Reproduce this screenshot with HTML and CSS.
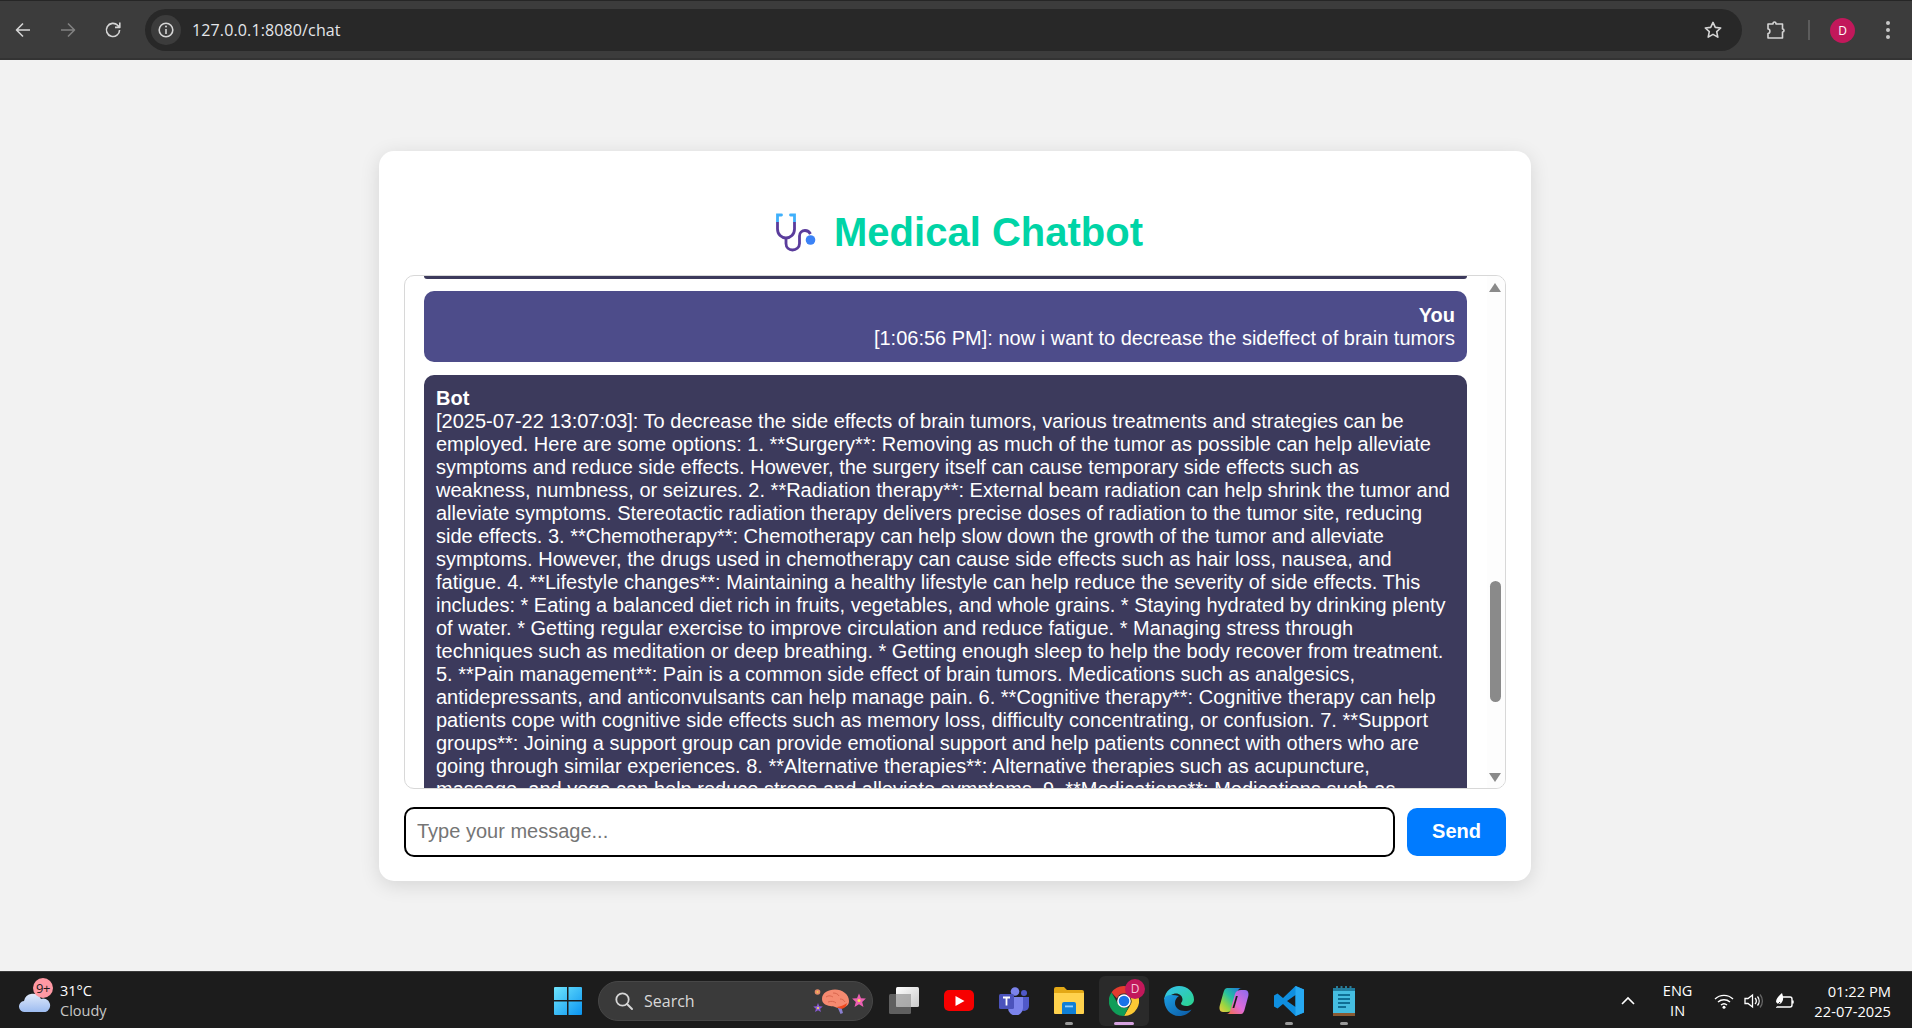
FILE: index.html
```html
<!DOCTYPE html>
<html lang="en">
<head>
<meta charset="utf-8">
<title>Medical Chatbot</title>
<link rel="stylesheet" href="styles.css">
</head>
<body>
<header class="chrome">
  <button class="nav-btn"><svg width="20" height="20" viewBox="0 0 20 20"><path d="M17 10H4M10 3.500 3.500 10l6.500 6.500" class="ico-line"/></svg></button>
  <button class="nav-btn nav-off"><svg width="20" height="20" viewBox="0 0 20 20"><path d="M3 10h13M10 3.500l6.500 6.500-6.500 6.500" class="ico-line"/></svg></button>
  <button class="nav-btn"><svg width="20" height="20" viewBox="0 0 20 20"><path d="M16.600 10a6.600 6.600 0 1 1-1.900-4.700L16.600 7M16.800 2.600V7.400H12" class="ico-line"/></svg></button>
  <div class="omnibox">
    <span class="info-chip"><svg width="18" height="18" viewBox="0 0 18 18"><circle cx="9" cy="9" r="6.800" class="ico-line"/><path d="M9 8v5" class="ico-line"/><circle cx="9" cy="5.600" r="1" class="ico-fill"/></svg></span>
    <span class="url">127.0.0.1:8080/chat</span>
    <svg class="star" width="20" height="20" viewBox="0 0 20 20"><path d="m10 2.400 2.300 5 5.400.6-4 3.700 1.100 5.400-4.800-2.700-4.800 2.700 1.100-5.400-4-3.700 5.400-.6z" class="ico-line"/></svg>
  </div>
  <svg class="puzzle" width="22" height="22" viewBox="0 0 22 22"><path d="M3 5h5c0-2.600 3-2.600 3 0h6.500v5c2 0 2 3 0 3v6H3v-4.500c2.500 0 2.500-4.500 0-4.500z" class="ico-line"/></svg>
  <span class="divider"></span>
  <span class="avatar">D</span>
  <span class="kebab"><i></i><i></i><i></i></span>
</header>

<main class="page">
  <section class="card">
    <h1 class="title">
      <svg class="steth" width="42" height="40" viewBox="0 0 42 40">
        <defs><linearGradient id="st" x1="0" y1="0" x2="0" y2="1"><stop offset=".3" stop-color="#3fb0fb"/><stop offset=".31" stop-color="#5a3c9c"/></linearGradient></defs>
        <path d="M6.500 3H2.500v14c0 5.500 4 9 8.500 9s8.500-3.500 8.500-9V3h-4" fill="none" stroke="url(#st)" stroke-width="2.800" stroke-linecap="round"/>
        <path d="M11 26v5.500c0 4 3 6.500 6.500 6.500s7-2.500 7-6.500V24c0-3.500 2.500-5.500 5.500-5.500s4.500 1.500 5.500 3.500" fill="none" stroke="#5a3c9c" stroke-width="2.800"/>
        <circle cx="35.500" cy="28" r="4.800" fill="#3b82f6"/>
      </svg>
      <span>Medical Chatbot</span>
    </h1>
    <div class="chat-box">
      <div class="messages">
        <div class="msg-stub"></div>
        <div class="msg msg-user"><strong>You</strong><br>[1:06:56 PM]: now i want to decrease the sideffect of brain tumors</div>
        <div class="msg msg-bot"><strong>Bot</strong><br>[2025-07-22 13:07:03]: To decrease the side effects of brain tumors, various treatments and strategies can be employed. Here are some options: 1. **Surgery**: Removing as much of the tumor as possible can help alleviate symptoms and reduce side effects. However, the surgery itself can cause temporary side effects such as weakness, numbness, or seizures. 2. **Radiation therapy**: External beam radiation can help shrink the tumor and alleviate symptoms. Stereotactic radiation therapy delivers precise doses of radiation to the tumor site, reducing side effects. 3. **Chemotherapy**: Chemotherapy can help slow down the growth of the tumor and alleviate symptoms. However, the drugs used in chemotherapy can cause side effects such as hair loss, nausea, and fatigue. 4. **Lifestyle changes**: Maintaining a healthy lifestyle can help reduce the severity of side effects. This includes: * Eating a balanced diet rich in fruits, vegetables, and whole grains. * Staying hydrated by drinking plenty of water. * Getting regular exercise to improve circulation and reduce fatigue. * Managing stress through techniques such as meditation or deep breathing. * Getting enough sleep to help the body recover from treatment. 5. **Pain management**: Pain is a common side effect of brain tumors. Medications such as analgesics, antidepressants, and anticonvulsants can help manage pain. 6. **Cognitive therapy**: Cognitive therapy can help patients cope with cognitive side effects such as memory loss, difficulty concentrating, or confusion. 7. **Support groups**: Joining a support group can provide emotional support and help patients connect with others who are going through similar experiences. 8. **Alternative therapies**: Alternative therapies such as acupuncture, massage, and yoga can help reduce stress and alleviate symptoms. 9. **Medications**: Medications such as</div>
      </div>
      <div class="scrollbar">
        <span class="arrow-up"></span>
        <span class="thumb"></span>
        <span class="arrow-down"></span>
      </div>
    </div>
    <form class="composer">
      <input class="composer-input" type="text" placeholder="Type your message...">
      <button class="send" type="button">Send</button>
    </form>
  </section>
</main>

<footer class="taskbar">
  <div class="tb-left">
    <div class="weather-icon">
      <svg width="32" height="22" viewBox="0 0 32 22"><defs><linearGradient id="cl" x1="0" y1="0" x2="0" y2="1"><stop offset="0" stop-color="#dfe9fb"/><stop offset="1" stop-color="#9dbcf0"/></linearGradient></defs><path d="M6 21a5.500 5.500 0 0 1-1-11 9 9 0 0 1 17-2 6.800 6.800 0 0 1 4.500 13z" fill="url(#cl)"/></svg>
      <span class="weather-badge">9+</span>
    </div>
    <div class="weather-text"><span class="w-temp">31°C</span><span class="w-desc">Cloudy</span></div>
  </div>

  <div class="tb-center">
    <div class="slot">
      <svg width="30" height="30" viewBox="0 0 30 30"><defs><linearGradient id="win" x1="0" y1="0" x2="1" y2="1"><stop offset="0" stop-color="#6fe5fd"/><stop offset="1" stop-color="#0a94f0"/></linearGradient></defs><path d="M1 2a1 1 0 0 1 1-1h12v13H1zM15.500 1H28a1 1 0 0 1 1 1v12H15.500zM1 15.500h13V29H2a1 1 0 0 1-1-1zM15.500 15.500H29V28a1 1 0 0 1-1 1H15.500z" fill="url(#win)"/></svg>
    </div>
    <div class="search">
      <svg width="20" height="20" viewBox="0 0 20 20"><circle cx="8.500" cy="8.500" r="6.200" fill="none" stroke="#d6d6d6" stroke-width="1.800"/><path d="m13 13 5 5" stroke="#d6d6d6" stroke-width="2" stroke-linecap="round"/></svg>
      <span class="search-label">Search</span>
      <svg class="brain" width="54" height="28" viewBox="0 0 54 28">
        <circle cx="5.500" cy="5" r="2.800" fill="#e58a6a"/>
        <circle cx="5.500" cy="5" r=".9" fill="#f2c84b"/>
        <polygon points="6,16 7.290,19.220 10.760,19.450 8.090,21.680 8.940,25.050 6,23.200 3.060,25.050 3.910,21.680 1.240,19.450 4.710,19.220" fill="#8a5ad6"/>
        <circle cx="6" cy="21" r="1.100" fill="#f5e050"/>
        <path d="M25 19l3.500 8 2.500-1-2-7z" fill="#8a7fd0"/>
        <path d="M10 12c0-6 6-9.500 13-9.500S37 7 37 14c0 4-3 6-6 6.500-3 .5-6 .5-8-.5-1.500-.8-3-.5-5-1-4-.7-8-2.500-8-7z" fill="#f58a70"/>
        <path d="M14 10c3-2 5-1 7 0M21 6c3 0 5 1 6 3M16 15c3-1 6-1 8 1M28 12c2 0 4 1 5 3" fill="none" stroke="#d9664e" stroke-width="1"/>
        <path d="M25 20c3-.5 7-1.500 10-4-.5 3-2 5-4 5.500-2 .5-5 0-6-1.500z" fill="#ee4a1f"/>
        <polygon points="47,6.500 49,11.200 53.900,11.600 50.200,14.900 51.500,20 47,17.300 42.500,20 43.800,14.900 40.100,11.600 45,11.200" fill="#ec5fb3"/>
        <circle cx="47" cy="13.500" r="1.500" fill="#f5e050"/>
      </svg>
    </div>
    <div class="slot">
      <svg width="30" height="30" viewBox="0 0 30 30"><defs><linearGradient id="tv" x1="0" y1="0" x2="1" y2="1"><stop offset="0" stop-color="#ffffff"/><stop offset="1" stop-color="#c9c9c9"/></linearGradient></defs><rect x="0" y="8" width="22" height="20" rx="1.500" fill="#5f5f5f"/><rect x="7" y="1" width="23" height="20" rx="1.500" fill="url(#tv)"/><path d="M7 8h15v13H7z" fill="#9a9a9a" opacity=".75"/></svg>
    </div>
    <div class="slot">
      <svg width="30" height="22" viewBox="0 0 30 22"><rect width="30" height="21" rx="5" fill="#f70000"/><path d="M11.500 6l9 5-9 5z" fill="#fff"/></svg>
    </div>
    <div class="slot">
      <svg width="31" height="28" viewBox="0 0 31 28"><circle cx="16" cy="4.500" r="4.300" fill="#7b83eb"/><circle cx="25" cy="6" r="3" fill="#5059c9"/><path d="M20 10h10v9a5 5 0 0 1-10 0z" fill="#5059c9"/><path d="M9 10h15v11a7.500 7.500 0 0 1-15 0z" fill="#7b83eb"/><rect x="0" y="7" width="15" height="15" rx="1.500" fill="#4b53bc"/><path d="M4 10.500h7M7.500 10.500v8" stroke="#fff" stroke-width="1.800"/></svg>
    </div>
    <div class="slot slot-run">
      <svg width="30" height="27" viewBox="0 0 30 27"><path d="M0 2a2 2 0 0 1 2-2h8l3 3h15a2 2 0 0 1 2 2v4H0z" fill="#e3a815"/><path d="M0 6h30v20a1 1 0 0 1-1 1H1a1 1 0 0 1-1-1z" fill="#ffd24d"/><path d="M8 17a2 2 0 0 1 2-2h10a2 2 0 0 1 2 2v10H8z" fill="#0f7fd6"/><rect x="11" y="18.500" width="8" height="1.800" fill="#8ed0ff"/></svg>
      <i class="run-dot"></i>
    </div>
    <div class="slot slot-active">
      <svg width="30" height="30" viewBox="0 0 30 30"><path d="M15 0a15 15 0 0 1 13 7.500H15a7.500 7.500 0 0 0-7 5L2.500 6.500A15 15 0 0 1 15 0z" fill="#e33b2e"/><path d="M28 7.500A15 15 0 0 1 15 30l6.500-11.200A7.500 7.500 0 0 0 20.500 10z" fill="#fcc934"/><path d="M2.500 6.500 9 18a7.500 7.500 0 0 0 10.500 3L15 30A15 15 0 0 1 2.500 6.500z" fill="#0f9d58"/><circle cx="15" cy="15" r="6.800" fill="#fff"/><circle cx="15" cy="15" r="5.300" fill="#1a73e8"/></svg>
      <span class="chrome-badge">D</span>
      <i class="run-bar"></i>
    </div>
    <div class="slot">
      <svg width="30" height="30" viewBox="0 0 30 30"><defs><linearGradient id="e1" x1="0" y1="0" x2="1" y2="1"><stop offset="0" stop-color="#35c1f1"/><stop offset="1" stop-color="#2bd48a"/></linearGradient><linearGradient id="e2" x1="0" y1="0" x2="1" y2="1"><stop offset="0" stop-color="#1b9de2"/><stop offset="1" stop-color="#0c59a4"/></linearGradient></defs><path d="M15 0c8.500 0 15 6 15 13.500 0 4-3.500 6.500-7.500 6.500-3 0-5.500-1-5.500-2.500 0-1 1.500-1.500 1.500-4C18.500 9.500 14 6.500 9.500 8 5 9.500 1 13.500.2 13 1.500 5 7.500 0 15 0z" fill="url(#e1)"/><path d="M.2 13C0 22 6 30 15 30c5.500 0 10-2.500 12.500-6.500-2 1-4.500 1.500-6.500 1.500-6 0-10-3.500-10-8 0-3 1.500-5.500 4-7C8 8 1 8.500.2 13z" fill="url(#e2)"/></svg>
    </div>
    <div class="slot">
      <svg width="30" height="28" viewBox="0 0 30 28"><defs><linearGradient id="c1" x1="1" y1="0" x2="0" y2="1"><stop offset="0" stop-color="#1f6fe0"/><stop offset=".45" stop-color="#25c2a0"/><stop offset=".75" stop-color="#9bd63f"/><stop offset="1" stop-color="#f5c842"/></linearGradient><linearGradient id="c2" x1="1" y1="0" x2="0" y2="1"><stop offset="0" stop-color="#8a6cf0"/><stop offset=".55" stop-color="#e06ad8"/><stop offset="1" stop-color="#f5703a"/></linearGradient></defs><path d="M8 1h15c-3 0-4 2-4.500 4L14 21c-1 3-3 4-6 4H4c-3 0-4-3-3.300-6L4 7c1-4 2-6 4-6z" fill="url(#c1)"/><path d="M22 27H7c3 0 4-2 4.500-4L16 7c1-3 3-4 6-4h4c3 0 4 3 3.300 6L26 21c-1 4-2 6-4 6z" fill="url(#c2)"/><path d="M17 9l-3.500 12h1.800L18.800 9z" fill="#1c1c1c"/></svg>
    </div>
    <div class="slot slot-run">
      <svg width="30" height="30" viewBox="0 0 30 30"><path d="M21.500 0 9 12 3.500 7.500 0 9.500v11l3.500 2L9 18l12.500 12 8.500-3.500V3.500zM21.500 9v12L13 15z" fill="#0f8fe0"/><path d="M21.500 0 30 3.500v23L21.500 30z" fill="#27a9f2"/></svg>
      <i class="run-dot"></i>
    </div>
    <div class="slot slot-run">
      <svg width="24" height="30" viewBox="0 0 24 30"><rect x="1" y="2" width="22" height="25" fill="#45bde0"/><path d="M1 2h22v3H1z" fill="#1e7da0"/><path d="M5 .5v3M9.500 .5v3M14 .5v3M18.500 .5v3" stroke="#2a7d98" stroke-width="2" stroke-linecap="round"/><path d="M6 9h12M6 13h12M6 17h12M6 21h8" stroke="#0f6f95" stroke-width="1.800"/><rect x="1" y="27" width="22" height="3" fill="#8a5a33"/></svg>
      <i class="run-dot"></i>
    </div>
  </div>

  <div class="tb-right">
    <svg class="tray-chevron" width="16" height="10" viewBox="0 0 16 10"><path d="m2 8 6-6 6 6" fill="none" stroke="#fff" stroke-width="1.600"/></svg>
    <div class="lang"><span>ENG</span><span>IN</span></div>
    <div class="tray-icons">
      <svg width="20" height="16" viewBox="0 0 20 16"><path d="M1 6a13 13 0 0 1 18 0M4 9a9 9 0 0 1 12 0M7 12a4.500 4.500 0 0 1 6 0" fill="none" stroke="#fff" stroke-width="1.400"/><circle cx="10" cy="14.200" r="1.500" fill="#fff"/></svg>
      <svg width="20" height="16" viewBox="0 0 20 16"><path d="M1 5.500h3L8.500 2v12L4 10.500H1z" fill="none" stroke="#fff" stroke-width="1.300"/><path d="M11 5a4 4 0 0 1 0 6M13.500 3.500a7 7 0 0 1 0 9" fill="none" stroke="#fff" stroke-width="1.300"/><path d="M16 1.500a10 10 0 0 1 0 13" fill="none" stroke="#666" stroke-width="1.300"/></svg>
      <svg width="20" height="18" viewBox="0 0 20 18"><path d="M6 5h10a2 2 0 0 1 2 2v6a2 2 0 0 1-2 2H2M19 8.500v3" fill="none" stroke="#fff" stroke-width="1.400"/><path d="M2 10c0-4 3-6 6-9 1 3 2 6 0 9-1 2-3 2-4 2z" fill="#fff"/><path d="M1 16l5-6" stroke="#1c1c1c" stroke-width="1"/></svg>
    </div>
    <div class="clock"><span>01:22 PM</span><span>22-07-2025</span></div>
  </div>
</footer>
</body>
</html>
```

FILE: styles.css
```css
* { box-sizing: border-box; }

html, body { height: 100%; }

body {
  margin: 0;
  height: 1028px;
  overflow: hidden;
  display: flex;
  flex-direction: column;
  background: #f2f2f2;
  font-family: "Liberation Sans", Arial, sans-serif;
}

/* Browser toolbar */
.chrome {
  height: 60px;
  flex: none;
  display: flex;
  align-items: center;
  background: #3c3c3c;
  border-top: 1px solid #262626;
  border-bottom: 2px solid #333;
  padding-top: 1px;
}

.nav-btn {
  width: 45px;
  height: 36px;
  padding: 0;
  border: 0;
  background: none;
  display: flex;
  align-items: center;
  justify-content: center;
}

.nav-off { opacity: .45; }

.ico-line { fill: none; stroke: #d5d5d5; stroke-width: 1.600; stroke-linejoin: round; }
.ico-fill { fill: #d5d5d5; }

.omnibox {
  width: 1597px;
  height: 42px;
  margin-left: 10px;
  border-radius: 21px;
  background: #282828;
  display: flex;
  align-items: center;
  padding: 0 19px 0 6px;
}

.info-chip {
  width: 30px;
  height: 30px;
  border-radius: 50%;
  background: #3c3c3c;
  display: flex;
  align-items: center;
  justify-content: center;
  flex: none;
}

.url {
  margin-left: 11px;
  color: #e4e6ea;
  font: 16px "Open Sans", sans-serif;
  letter-spacing: .13px;
  flex: 1;
}

.star { flex: none; }

.puzzle { margin-left: 23px; flex: none; }

.divider {
  width: 2px;
  height: 20px;
  margin-left: 21px;
  background: #5c5c5c;
  flex: none;
}

.avatar {
  width: 25px;
  height: 25px;
  margin-left: 20px;
  border-radius: 50%;
  background: #c2185b;
  color: #fff;
  font: 12px/25px "Open Sans", sans-serif;
  text-align: center;
  flex: none;
}

.kebab {
  margin-left: 31px;
  display: flex;
  flex-direction: column;
  gap: 3px;
}

.kebab i {
  display: block;
  width: 4px;
  height: 4px;
  border-radius: 50%;
  background: #c8c8c8;
}

/* Page */
.page {
  flex: 1;
  display: flex;
  align-items: flex-start;
  justify-content: center;
  padding: 91px 2px 0 0;
}

.card {
  width: 1152px;
  height: 730px;
  background: #fff;
  border-radius: 15px;
  box-shadow: 0 4px 20px rgba(0, 0, 0, .12);
  padding: 0 25px 24px;
  display: flex;
  flex-direction: column;
}

.title {
  height: 124px;
  flex: none;
  margin: 0;
  padding: 38px 0 0 8px;
  display: flex;
  align-items: center;
  justify-content: center;
  gap: 17px;
  color: #00d4a6;
  font-size: 40px;
  font-weight: 700;
}

.chat-box {
  height: 514px;
  flex: none;
  display: flex;
  border: 1px solid #d8d8d8;
  border-radius: 10px;
  overflow: hidden;
}

.messages {
  flex: 1;
  min-width: 0;
  overflow: hidden;
  padding: 0 20px 0 19px;
}

.msg {
  border-radius: 10px;
  padding: 12px;
  color: #fff;
  font-size: 20px;
  line-height: 23px;
}

.msg-stub {
  height: 3px;
  border-radius: 0 0 10px 10px;
  background: #3c3a5c;
  margin-bottom: 12px;
}

.msg-user {
  background: #4d4c8a;
  text-align: right;
  margin-bottom: 13px;
  height: 71px;
  padding-top: 13px;
}

.msg-bot { background: #3c3a5c; }

.scrollbar {
  width: 18px;
  flex: none;
  background: #fdfdfd;
  position: relative;
}

.arrow-up, .arrow-down, .thumb { position: absolute; display: block; }

.arrow-up {
  left: 2px;
  top: 7px;
  border-left: 6.500px solid transparent;
  border-right: 6.500px solid transparent;
  border-bottom: 9px solid #8a8a8a;
}

.arrow-down {
  left: 2px;
  bottom: 6px;
  border-left: 6.500px solid transparent;
  border-right: 6.500px solid transparent;
  border-top: 9px solid #8a8a8a;
}

.thumb {
  left: 3px;
  top: 305px;
  width: 11px;
  height: 121px;
  border-radius: 6px;
  background: #8a8a8a;
}

.composer {
  margin: 18px 0 0;
  display: flex;
  align-items: center;
  gap: 12px;
}

.composer-input {
  flex: 1;
  min-width: 0;
  height: 50px;
  padding: 0 11px 2px;
  border: 2px solid #000;
  border-radius: 10px;
  font: 20px "Liberation Sans", Arial, sans-serif;
  outline: none;
}

.composer-input::placeholder { color: #757575; }

.send {
  width: 99px;
  height: 48px;
  padding: 0 0 2px;
  border: 0;
  border-radius: 10px;
  background: #007bff;
  color: #fff;
  font: 700 20px "Liberation Sans", Arial, sans-serif;
}

/* Taskbar */
.taskbar {
  height: 57px;
  flex: none;
  display: grid;
  grid-template-columns: 1fr auto 1fr;
  align-items: center;
  padding-top: 1px;
  background: #1c1c1c;
  border-top: 1px solid #3a3a3a;
  color: #fff;
  font-family: "Open Sans", sans-serif;
  font-size: 14.500px;
}

.tb-left {
  display: flex;
  align-items: center;
  padding-left: 19px;
}

.weather-icon {
  position: relative;
  width: 32px;
  height: 22px;
  margin-top: 2px;
}

.weather-badge {
  position: absolute;
  left: 14px;
  top: -13px;
  width: 20px;
  height: 20px;
  border-radius: 50%;
  background: #ff99a4;
  color: #1c1c1c;
  font-size: 13px;
  line-height: 20px;
  text-align: center;
  letter-spacing: -.5px;
}

.weather-text {
  margin-left: 9px;
  display: flex;
  flex-direction: column;
  line-height: 20px;
}

.w-desc { color: #c8c8c8; }

.tb-center {
  display: flex;
  align-items: center;
  gap: 5px;
}

.slot {
  position: relative;
  width: 50px;
  height: 50px;
  display: flex;
  align-items: center;
  justify-content: center;
  border-radius: 6px;
}

.slot-active { background: #2a2a2a; }

.run-dot {
  position: absolute;
  left: 21px;
  bottom: 1px;
  width: 8px;
  height: 3px;
  border-radius: 2px;
  background: #9a9a9a;
}

.run-bar {
  position: absolute;
  left: 15px;
  bottom: 1px;
  width: 20px;
  height: 3px;
  border-radius: 2px;
  background: #d6a3e0;
}

.chrome-badge {
  position: absolute;
  left: 26px;
  top: 3px;
  width: 20px;
  height: 20px;
  border-radius: 50%;
  background: #c2185b;
  color: #f4c6d8;
  font-size: 12px;
  line-height: 20px;
  text-align: center;
}

.search {
  width: 275px;
  height: 40px;
  display: flex;
  align-items: center;
  padding: 0 6px 0 15px;
  border-radius: 20px;
  background: #3a3a3a;
  border: 1px solid #474747;
  margin-right: 1px;
}

.search-label {
  flex: 1;
  margin-left: 10px;
  color: #d8d8d8;
  font-size: 16px;
}

.tb-right {
  display: flex;
  align-items: center;
  justify-content: flex-end;
  padding-right: 21px;
}

.lang {
  margin-left: 27px;
  display: flex;
  flex-direction: column;
  align-items: center;
  line-height: 20px;
}

.tray-icons {
  margin-left: 22px;
  display: flex;
  align-items: center;
  gap: 10px;
}

.clock {
  margin-left: 20px;
  display: flex;
  flex-direction: column;
  align-items: flex-end;
  font-size: 14.700px;
  line-height: 20px;
}
```
